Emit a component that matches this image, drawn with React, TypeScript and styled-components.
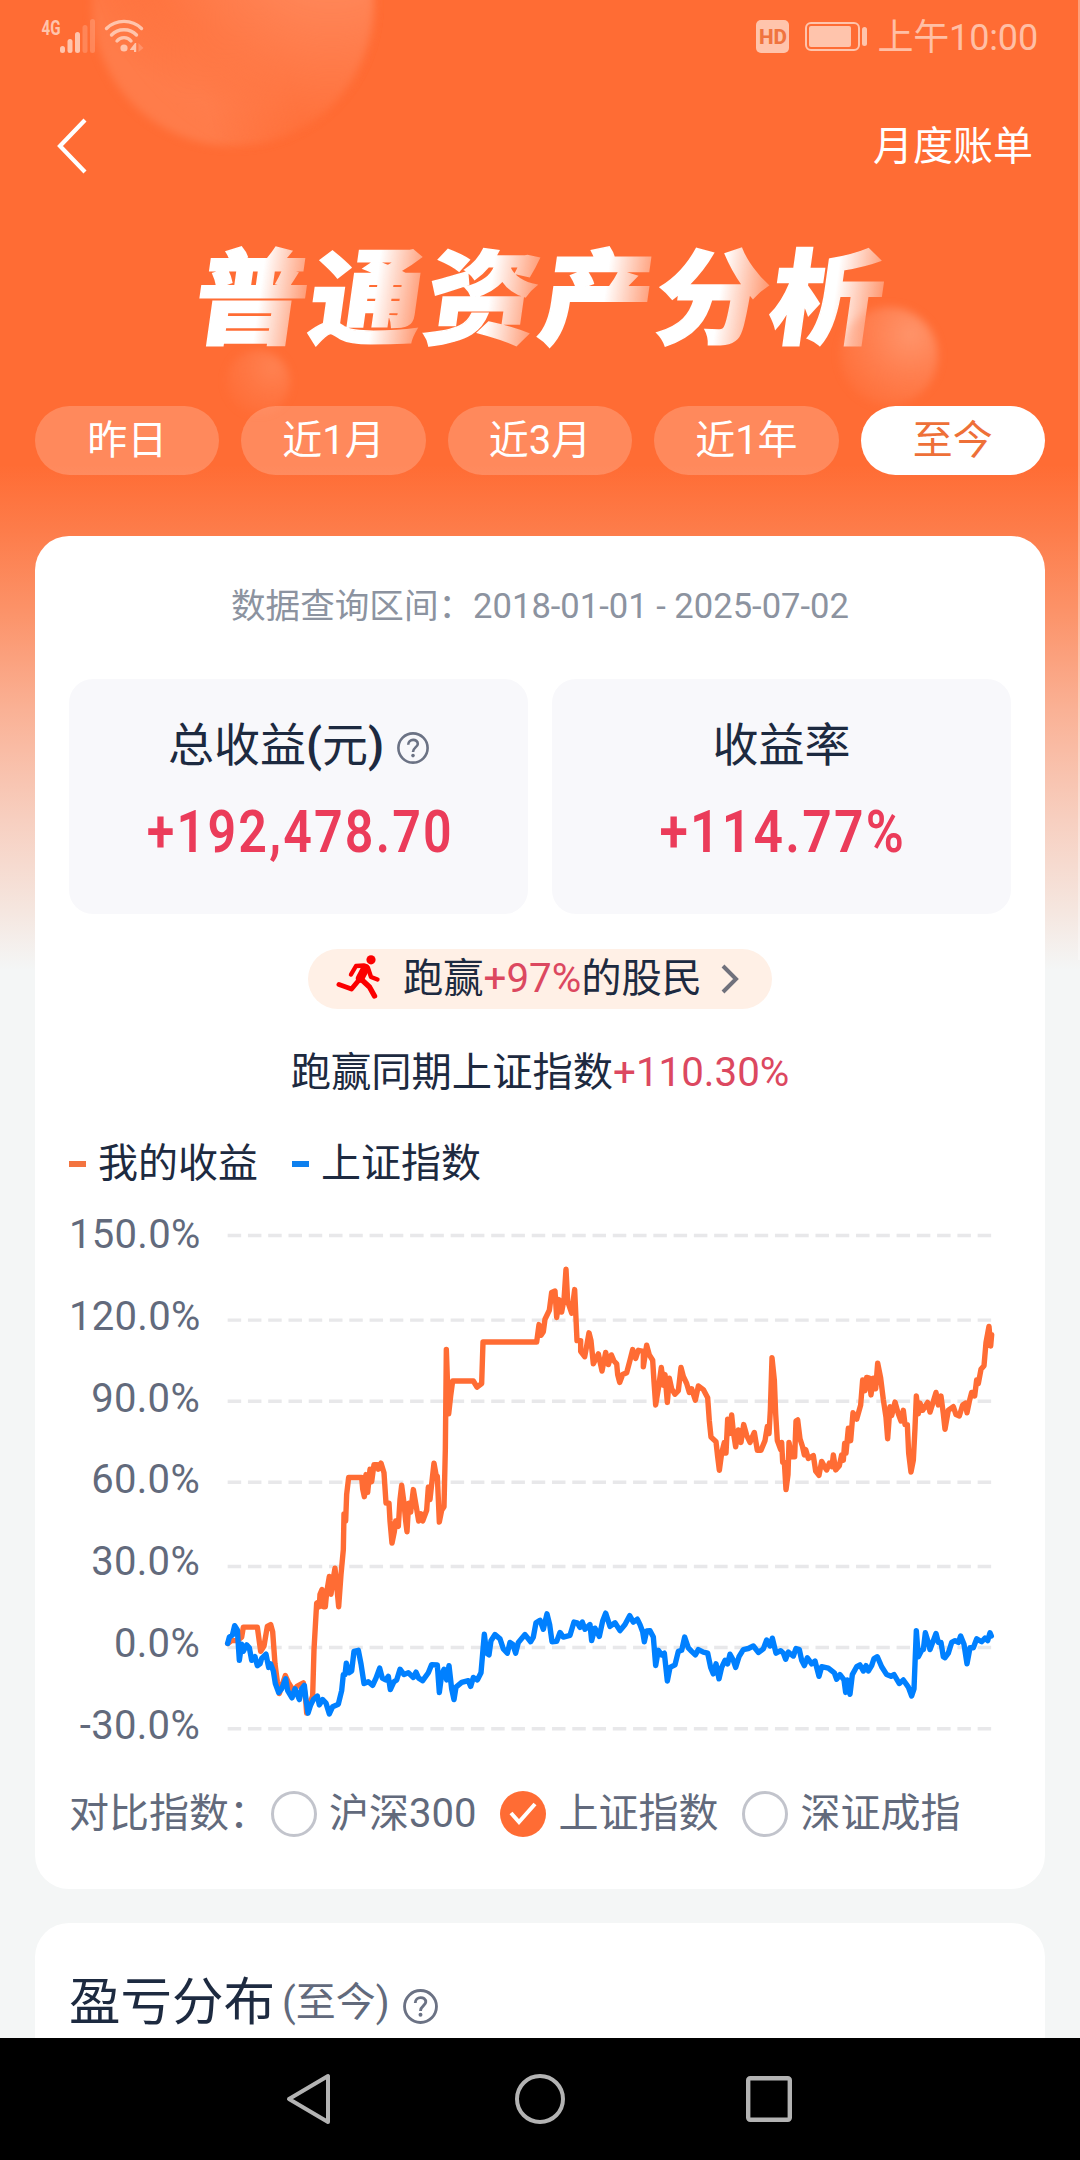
import React from "react";
import styled, { createGlobalStyle } from "styled-components";

const GlobalStyle = createGlobalStyle`
  * { box-sizing: border-box; }
  body { margin: 0; background: #f4f6f6; }
`;

const Screen = styled.div`
  position: relative;
  display: flex;
  flex-direction: column;
  width: 1080px;
  height: 2160px;
  overflow: hidden;
  color: #1d2a40;
  font-family: Roboto, "Noto Sans CJK SC", sans-serif;
  font-size: 40px;
  white-space: nowrap;
  background: linear-gradient(
    180deg,
    #ff6c34 0,
    #ff6c34 465px,
    #fd7c4a 530px,
    #fc9268 610px,
    #fab195 710px,
    #f7cfc0 820px,
    #f5e6df 910px,
    #f4f6f6 970px
  );
`;

const EdgeLight = styled.div`
  position: absolute;
  top: 0;
  right: 0;
  width: 2px;
  height: 960px;
  background: rgba(255, 255, 255, 0.35);
`;

const Bubble = styled.div<{ $x: number; $y: number; $w: number; $h: number }>`
  position: absolute;
  left: ${(p) => p.$x}px;
  top: ${(p) => p.$y}px;
  width: ${(p) => p.$w}px;
  height: ${(p) => p.$h}px;
  border-radius: 50%;
  filter: blur(4px);
`;

const BigBubble = styled(Bubble)`
  background:
    radial-gradient(circle at 62% 30%, rgba(255, 108, 52, 1) 0, rgba(255, 108, 52, 0.9) 42%, rgba(255, 108, 52, 0) 68%) -24px -22px no-repeat,
    linear-gradient(75deg, #ff7c4a 0, #ff7c4a 35%, #ff6c34 60%);
`;

const BigShine = styled(Bubble)`
  background: radial-gradient(circle at 85% 22%, rgba(255, 145, 102, 1) 0, rgba(255, 132, 86, 0.85) 32%, rgba(255, 108, 52, 0) 74%);
`;

const SmallBubble = styled(Bubble)<{ $alpha: number }>`
  background: radial-gradient(
    circle at 72% 28%,
    rgba(255, 165, 130, ${(p) => p.$alpha}) 0,
    rgba(255, 145, 105, ${(p) => p.$alpha * 0.75}) 40%,
    rgba(255, 120, 68, ${(p) => p.$alpha * 0.12}) 88%
  );
`;

const StatusBar = styled.div`
  position: relative;
  display: flex;
  align-items: flex-start;
  justify-content: space-between;
  height: 72px;
  padding: 17px 42px 0 41px;
`;

const StatusTime = styled.span`
  margin-left: 10px;
  color: #ffbfa5;
  font-size: 36px;
  line-height: 43px;
  letter-spacing: -0.15px;
`;

const StatusGroup = styled.div`
  display: flex;
  align-items: flex-start;
`;

const NavBar = styled.div`
  position: relative;
  display: flex;
  align-items: center;
  justify-content: space-between;
  height: 146px;
  padding: 2px 47px 0 56px;
  color: #fff;
`;

const NavLink = styled.a`
  margin-bottom: 7px;
`;

const Hero = styled.h1`
  position: relative;
  display: flex;
  justify-content: center;
  height: 156px;
  margin: 0 0 32px;
  transform: skewX(-8deg) scaleX(1.09);
  font-family: "Noto Sans CJK SC", sans-serif;
  font-size: 103.5px;
  font-weight: 900;
  line-height: 147px;
`;

const HeroGlyph = styled.span`
  width: 105.5px;
  text-align: center;
  color: transparent;
  background: linear-gradient(90deg, #fff 56%, rgba(255, 255, 255, 0.3) 98%);
  background-clip: text;
  -webkit-background-clip: text;
  -webkit-text-stroke: 1.5px transparent;
`;

const Tabs = styled.div`
  position: relative;
  display: grid;
  grid-template-columns: repeat(5, 1fr);
  gap: 22px;
  padding: 0 35px;
`;

const Tab = styled.button<{ $active: boolean }>`
  height: 69px;
  padding: 0;
  border: 0;
  border-radius: 35px;
  font: inherit;
  line-height: 69px;
  color: ${(p) => (p.$active ? "#ee7038" : "#fff")};
  background: ${(p) => (p.$active ? "#fff" : "rgba(255, 255, 255, 0.2)")};
`;

const Card = styled.section`
  position: relative;
  display: flex;
  flex-direction: column;
  margin: 0 35px;
  padding: 0 34px;
  border-radius: 34px;
  background: #fff;
`;

const SummaryCard = styled(Card)`
  height: 1353px;
  flex: none;
  margin-top: 61px;
  padding-top: 41px;
`;

const Line = styled.div<{ $top?: number }>`
  display: flex;
  align-items: center;
  justify-content: center;
  height: 60px;
  margin-top: ${(p) => p.$top ?? 0}px;
  line-height: 60px;
`;

const RangeLine = styled(Line)`
  padding-bottom: 2px;
  color: #8c93a0;
  font-size: 34.6px;
  line-height: 58px;
`;

const CompareLine = styled(Line)`
  font-size: 40.3px;
`;

const Stats = styled.div`
  display: grid;
  grid-template-columns: 1fr 1fr;
  gap: 24px;
  margin-top: 42px;
`;

const Stat = styled.div`
  display: flex;
  flex-direction: column;
  align-items: center;
  height: 235px;
  padding-top: 36px;
  border-radius: 24px;
  background: #f8f8fb;
`;

const StatLabel = styled.div`
  display: flex;
  align-items: center;
  gap: 13px;
  height: 60px;
  font-size: 46px;
  line-height: 60px;
`;

const Paren = styled.span`
  font-weight: 600;
`;

const StatValue = styled.div<{ $stretch: number }>`
  height: 80px;
  margin-top: 17px;
  padding-left: 4px;
  color: #eb3c5a;
  font-size: 59px;
  font-weight: 600;
  line-height: 80px;
  letter-spacing: 2.6px;
  transform: scaleX(${(p) => p.$stretch});
`;

const Pill = styled.a`
  display: flex;
  align-items: center;
  align-self: center;
  width: 464px;
  height: 60px;
  margin-top: 35px;
  padding-left: 28px;
  border-radius: 30px;
  font-size: 40.3px;
  line-height: 60px;
  background: #fff0e6;
`;

const PillText = styled.span`
  margin: 0 18px 0 22px;
`;

const Gain = styled.span`
  color: #dc4860;
`;

const Legend = styled(Line)`
  justify-content: flex-start;
`;

const LegendItem = styled.span<{ $color: string }>`
  display: flex;
  align-items: center;
  gap: 12px;
  margin-right: 34px;
  &::before {
    content: "";
    width: 17px;
    height: 6px;
    background: ${(p) => p.$color};
  }
`;

const Chart = styled.div`
  display: flex;
  height: 514px;
  margin-top: 27px;
`;

const Axis = styled.div`
  display: flex;
  flex-direction: column;
  width: 132px;
  margin: -27px 22px 0 0;
  padding-right: 1px;
  color: #626a7c;
  letter-spacing: 0.3px;
  text-align: right;
`;

const Tick = styled.span`
  flex: none;
  height: 81.8px;
  line-height: 82px;
`;

const CompareRow = styled(Line)`
  justify-content: flex-start;
  color: #626a7c;
`;

const CompareTitle = styled.span`
  margin-right: 2px;
`;

const Option = styled.label`
  display: flex;
  align-items: center;
  gap: 12px;
  margin-right: 24px;
`;

const Radio = styled.span<{ $on: boolean }>`
  display: flex;
  align-items: center;
  justify-content: center;
  width: 46px;
  height: 46px;
  border: ${(p) => (p.$on ? "0" : "3px solid #c2c4cc")};
  border-radius: 50%;
  background: ${(p) => (p.$on ? "#ff6c34" : "#fff")};
`;

const DistributionCard = styled(Card)`
  flex: 1;
  min-height: 0;
  margin-top: 34px;
  padding-top: 41px;
  border-radius: 34px 34px 0 0;
`;

const SectionTitle = styled.h2`
  display: flex;
  align-items: center;
  height: 78px;
  margin: 0;
  font-size: 51.5px;
  font-weight: 400;
  line-height: 78px;
`;

const SectionNote = styled.span`
  margin: 0 13px 0 7px;
  color: #626a7c;
  font-size: 40px;
`;

const HelpMark = styled.svg`
  flex: none;
  margin-top: 6px;
`;

const SystemNav = styled.nav`
  position: relative;
  display: flex;
  flex: none;
  align-items: center;
  height: 122px;
  padding-left: 285px;
  background: #000;
`;

const SystemButton = styled.span<{ $gap: number }>`
  display: flex;
  margin-left: ${(p) => p.$gap}px;
`;

const BatteryIcon = styled.svg`
  margin-left: 16px;
`;

const RunnerIcon = styled.svg`
  margin-bottom: 4px;
`;

const GRID_Y = [100.5, 337.5, 564.5, 791.5, 1027.5, 1254, 1481.5];
const TICKS = ["150.0%", "120.0%", "90.0%", "60.0%", "30.0%", "0.0%", "-30.0%"];

const MY_RETURN =
  "563,1243 575,1235 592,1235 605,1225 610,1197 652,1197 662,1265 672,1250 682,1195 692,1190 698,1210 705,1300 712,1350 718,1383 726,1360 736,1333 745,1352 760,1375 772,1362 790,1353 797,1400 800,1438 806,1420 818,1390 822,1260 830,1130 834,1128 838,1140 840,1105 846,1092 850,1140 856,1140 860,1100 868,1055 873,1105 880,1060 885,1032 890,1080 896,1140 903,1050 910,980 912,880 917,900 920,825 926,778 965,778 968,810 973,832 978,770 983,820 990,755 995,790 1002,742 1012,742 1015,755 1023,738 1032,765 1038,850 1047,850 1050,900 1056,962 1063,930 1067,900 1075,915 1080,840 1085,800 1092,850 1097,900 1101,930 1106,850 1112,875 1120,812 1127,850 1136,900 1143,880 1148,900 1160,870 1165,805 1170,840 1177,780 1182,738 1188,770 1192,775 1198,903 1205,870 1212,860 1216,700 1219,420 1222,500 1226,600 1232,550 1238,508 1300,508 1311,525 1325,515 1329,399 1490,399 1497,350 1503,380 1510,370 1515,335 1528,310 1535,260 1545,256 1550,330 1557,280 1565,315 1572,280 1578,195 1583,285 1595,318 1604,252 1611,395 1622,395 1622,425 1634,440 1640,410 1647,373 1653,395 1660,460 1675,432 1686,480 1697,428 1705,462 1714,435 1722,452 1730,460 1733,490 1739,512 1748,490 1760,485 1770,450 1778,420 1787,445 1795,422 1810,425 1810,468 1820,408 1828,435 1838,450 1842,510 1847,575 1855,530 1864,470 1870,520 1875,490 1882,568 1888,500 1895,530 1905,545 1915,535 1923,470 1930,495 1940,515 1948,540 1955,530 1966,562 1975,522 1990,532 2003,555 2008,620 2013,665 2028,678 2033,720 2038,758 2045,710 2053,680 2058,710 2063,615 2068,655 2075,603 2080,650 2087,692 2095,645 2103,680 2111,630 2120,660 2130,680 2143,652 2152,702 2163,702 2175,675 2182,635 2187,655 2191,590 2196,443 2203,505 2207,600 2212,675 2222,700 2225,680 2228,735 2233,735 2238,812 2244,770 2247,680 2255,720 2264,720 2268,620 2273,617 2280,670 2287,690 2293,715 2297,700 2305,725 2320,717 2327,760 2337,772 2345,733 2355,750 2360,757 2368,738 2376,748 2380,715 2387,757 2398,745 2405,715 2410,730 2414,682 2418,710 2425,640 2432,675 2439,597 2450,615 2462,575 2468,505 2475,535 2480,498 2488,500 2493,547 2500,500 2507,530 2513,458 2522,500 2530,560 2538,610 2543,670 2550,580 2555,605 2565,567 2575,600 2583,620 2590,590 2595,630 2602,630 2606,710 2613,763 2620,730 2625,640 2629,550 2635,600 2640,570 2648,590 2663,568 2670,595 2680,565 2688,540 2695,575 2703,550 2710,600 2715,643 2725,590 2740,580 2748,602 2758,606 2768,575 2776,570 2781,597 2788,565 2795,540 2804,550 2810,505 2815,515 2823,475 2832,465 2838,400 2847,355 2852,410 2855,378";

const INDEX_RETURN =
  "563,1243 568,1225 577,1220 584,1193 592,1205 598,1290 605,1245 610,1265 620,1247 628,1255 635,1290 645,1280 652,1305 660,1300 665,1285 678,1273 686,1310 692,1300 700,1320 706,1355 716,1380 725,1370 737,1342 743,1375 756,1395 765,1370 778,1400 785,1370 793,1360 798,1400 804,1438 812,1415 820,1400 832,1390 838,1415 848,1400 858,1410 868,1440 878,1420 895,1413 905,1375 910,1330 915,1330 919,1298 927,1325 935,1320 942,1265 955,1262 963,1300 972,1355 985,1350 998,1360 1008,1340 1019,1312 1027,1340 1037,1345 1045,1335 1051,1372 1062,1350 1070,1345 1080,1315 1092,1330 1105,1325 1120,1338 1128,1323 1136,1340 1148,1347 1165,1325 1175,1302 1192,1303 1198,1380 1205,1330 1212,1315 1220,1345 1227,1305 1235,1370 1242,1400 1248,1365 1265,1352 1285,1347 1292,1363 1300,1338 1312,1345 1323,1325 1329,1260 1333,1217 1340,1270 1347,1275 1353,1235 1365,1218 1380,1230 1390,1258 1402,1270 1410,1240 1418,1245 1427,1270 1435,1240 1455,1218 1472,1238 1480,1225 1488,1185 1500,1178 1510,1203 1521,1160 1529,1190 1536,1238 1550,1237 1560,1212 1570,1225 1590,1220 1602,1183 1612,1185 1620,1198 1627,1183 1635,1203 1650,1190 1655,1235 1665,1200 1678,1223 1688,1180 1697,1158 1710,1195 1725,1185 1740,1207 1755,1190 1769,1165 1780,1183 1792,1175 1800,1190 1808,1210 1813,1238 1820,1208 1830,1207 1840,1225 1847,1305 1855,1262 1865,1275 1873,1270 1882,1348 1890,1310 1905,1303 1915,1265 1925,1262 1934,1225 1945,1255 1955,1265 1966,1275 1975,1260 1990,1267 2003,1270 2012,1310 2020,1328 2028,1300 2037,1342 2045,1310 2055,1290 2063,1300 2070,1273 2080,1290 2087,1310 2097,1280 2110,1260 2125,1257 2140,1250 2155,1268 2170,1258 2180,1233 2190,1250 2197,1228 2208,1270 2222,1263 2230,1270 2237,1287 2245,1267 2260,1278 2268,1257 2278,1260 2285,1290 2293,1305 2302,1283 2315,1300 2325,1292 2337,1335 2345,1308 2365,1312 2383,1325 2390,1343 2400,1330 2412,1345 2417,1380 2422,1345 2430,1385 2437,1330 2450,1308 2460,1303 2470,1320 2478,1305 2485,1320 2495,1305 2502,1285 2512,1280 2525,1308 2540,1330 2553,1335 2562,1330 2578,1355 2590,1345 2605,1365 2615,1390 2622,1370 2625,1300 2629,1207 2635,1280 2645,1262 2650,1260 2656,1213 2665,1240 2670,1260 2680,1235 2688,1215 2695,1240 2703,1240 2710,1280 2715,1283 2725,1270 2735,1240 2745,1235 2755,1240 2762,1222 2772,1245 2781,1300 2790,1255 2800,1255 2810,1230 2825,1238 2835,1228 2843,1235 2850,1213 2854,1222";

function SignalIcons() {
  return (
    <svg width="110" height="40" viewBox="41 17 110 40" fill="#ffc4ac">
      <text x="41.5" y="34.5" fontFamily="Roboto, sans-serif" fontWeight="700" fontSize="21" textLength="19" lengthAdjust="spacingAndGlyphs">4G</text>
      <rect x="60" y="46" width="5" height="7" rx="2.5" />
      <rect x="67.5" y="39" width="5" height="14" rx="2.5" />
      <rect x="75" y="32" width="5" height="21" rx="2.5" />
      <rect x="82.5" y="25" width="5" height="28" rx="2.5" opacity=".3" />
      <rect x="90" y="19" width="5" height="34" rx="2.5" opacity=".3" />
      <g fill="none" stroke="#ffc4ac" strokeWidth="3.4" strokeLinecap="round">
        <path d="M106.500 28.500C116 19 132 19 141.500 28.500" />
        <path d="M111.500 35C118 28 130 28 136.500 35" />
        <path d="M117 41C120.500 36.500 127.500 36.500 131 41" />
      </g>
      <circle cx="124" cy="48" r="3.6" />
      <path d="M130 49.500L135 43H136.200V52H134V50H130Z" />
      <path d="M138.500 43L143.500 48L138.500 52Z" opacity=".35" />
    </svg>
  );
}

function HdBadge() {
  return (
    <svg width="33" height="36" viewBox="0 0 33 36">
      <rect y="3" width="33" height="33" rx="5" fill="#ffc4ac" />
      <text x="3" y="27" fill="#f0743f" fontFamily="Roboto, sans-serif" fontWeight="800" fontSize="21" textLength="28" lengthAdjust="spacingAndGlyphs">HD</text>
    </svg>
  );
}

function Battery() {
  return (
    <BatteryIcon width="62" height="36" viewBox="0 0 62 36">
      <rect x="1" y="6" width="53" height="27" rx="5" fill="none" stroke="#ffc4ac" strokeWidth="2" />
      <rect x="4" y="9" width="42" height="21" rx="2" fill="#ffc4ac" />
      <rect x="57" y="10" width="5" height="19" rx="2.5" fill="#ffc4ac" />
    </BatteryIcon>
  );
}

function BackIcon() {
  return (
    <svg width="34" height="60" viewBox="56 117 34 60" fill="none" stroke="#fff" strokeWidth="4.2">
      <path d="M85 121L60 147L85 173" />
    </svg>
  );
}

function HelpIcon({ size }: { size: number }) {
  return (
    <HelpMark width={size} height={size} viewBox="0 0 32 32" fill="none" stroke="#6b7284" strokeWidth="2.6">
      <circle cx="16" cy="16" r="14.6" />
      <path d="M11.200 12.800C11.200 6.200 21 6.500 20.800 12C20.700 15 16 15.600 16 20" />
      <circle cx="16" cy="23.6" r="1.8" fill="#6b7284" stroke="none" />
    </HelpMark>
  );
}

function Runner() {
  return (
    <RunnerIcon width="45" height="45" viewBox="0 0 45 45" fill="none" stroke="#fb0000" strokeLinecap="round" strokeLinejoin="round">
      <circle cx="35" cy="4.8" r="4.6" fill="#fb0000" stroke="none" />
      <path d="M29.500 13L24 23.500" strokeWidth="8.6" />
      <path d="M28 10.500L20 11L15 19.500" strokeWidth="4.4" />
      <path d="M32 13L35 22L41.500 24.500" strokeWidth="4.4" />
      <path d="M23 25L15.500 34L3 29.500" strokeWidth="5" />
      <path d="M26 25L33.500 32L38.500 41" strokeWidth="5.4" />
    </RunnerIcon>
  );
}

function PerformanceChart() {
  return (
    <svg
      width="776"
      height="514.3"
      viewBox="549 60 2328 1440"
      preserveAspectRatio="none"
      fill="none"
      strokeLinejoin="round"
      strokeLinecap="round"
    >
      {GRID_Y.map((y) => (
        <path key={y} d={`M563 ${y}H2855`} stroke="#e8e8ea" strokeWidth="3.4" strokeLinecap="butt" strokeDasharray="13.5 6.77" vectorEffect="non-scaling-stroke" />
      ))}
      <polyline points={MY_RETURN} stroke="#ff6c34" strokeWidth="5.4" vectorEffect="non-scaling-stroke" />
      <polyline points={INDEX_RETURN} stroke="#0080ff" strokeWidth="5.4" vectorEffect="non-scaling-stroke" />
    </svg>
  );
}

const PERIODS = ["昨日", "近1月", "近3月", "近1年", "至今"];
const INDEXES = ["沪深300", "上证指数", "深证成指"];

export default function App() {
  return (
    <>
      <GlobalStyle />
      <Screen>
        <EdgeLight />
        <BigBubble $x={92} $y={-138} $w={282} $h={284} />
        <BigShine $x={92} $y={-138} $w={282} $h={284} />
        <SmallBubble $x={226} $y={350} $w={64} $h={64} $alpha={0.38} />
        <StatusBar>
          <SignalIcons />
          <StatusGroup>
            <HdBadge />
            <Battery />
            <StatusTime>上午10:00</StatusTime>
          </StatusGroup>
        </StatusBar>
        <NavBar>
          <BackIcon />
          <NavLink>月度账单</NavLink>
        </NavBar>
        <Hero>
          {Array.from("普通资产分析").map((c) => (
            <HeroGlyph key={c}>{c}</HeroGlyph>
          ))}
        </Hero>
        <SmallBubble $x={840} $y={307} $w={98} $h={98} $alpha={0.7} />
        <Tabs>
          {PERIODS.map((p) => (
            <Tab key={p} $active={p === "至今"}>{p}</Tab>
          ))}
        </Tabs>

        <SummaryCard>
          <RangeLine>数据查询区间：2018-01-01 - 2025-07-02</RangeLine>
          <Stats>
            <Stat>
              <StatLabel>
                <span>总收益<Paren>(</Paren>元<Paren>)</Paren></span>
                <HelpIcon size={32} />
              </StatLabel>
              <StatValue $stretch={0.85}>+192,478.70</StatValue>
            </Stat>
            <Stat>
              <StatLabel>收益率</StatLabel>
              <StatValue $stretch={0.875}>+114.77%</StatValue>
            </Stat>
          </Stats>
          <Pill>
            <Runner />
            <PillText>跑赢<Gain>+97%</Gain>的股民</PillText>
            <svg width="20" height="30" viewBox="0 0 20 30" fill="none" stroke="#70717c" strokeWidth="4">
              <path d="M3 2L16 15L3 28" />
            </svg>
          </Pill>
          <CompareLine $top={34}>跑赢同期上证指数<Gain>+110.30%</Gain></CompareLine>
          <Legend $top={31}>
            <LegendItem $color="#f37440">我的收益</LegendItem>
            <LegendItem $color="#0e80ee">上证指数</LegendItem>
          </Legend>
          <Chart>
            <Axis>
              {TICKS.map((t) => (
                <Tick key={t}>{t}</Tick>
              ))}
            </Axis>
            <PerformanceChart />
          </Chart>
          <CompareRow $top={49}>
            <CompareTitle>对比指数：</CompareTitle>
            {INDEXES.map((name) => {
              const on = name === "上证指数";
              return (
                <Option key={name}>
                  <Radio $on={on}>
                    {on && (
                      <svg width="30" height="28" viewBox="0 0 30 28" fill="none" stroke="#fff" strokeWidth="4">
                        <path d="M3 13L11 22L27 4" />
                      </svg>
                    )}
                  </Radio>
                  {name}
                </Option>
              );
            })}
          </CompareRow>
        </SummaryCard>

        <DistributionCard>
          <SectionTitle>
            盈亏分布
            <SectionNote>(至今)</SectionNote>
            <HelpIcon size={35} />
          </SectionTitle>
        </DistributionCard>

        <SystemNav>
          <SystemButton $gap={0}>
            <svg width="48" height="54" viewBox="0 0 48 54" fill="none" stroke="#b3b3b3" strokeWidth="4" strokeLinejoin="round">
              <path d="M43 4V50L4 27Z" />
            </svg>
          </SystemButton>
          <SystemButton $gap={182}>
            <svg width="50" height="50" viewBox="0 0 50 50" fill="none" stroke="#b3b3b3" strokeWidth="4">
              <circle cx="25" cy="25" r="23" />
            </svg>
          </SystemButton>
          <SystemButton $gap={181}>
            <svg width="46" height="46" viewBox="0 0 46 46" fill="none" stroke="#b3b3b3" strokeWidth="4.4">
              <rect x="2.2" y="2.2" width="41.6" height="41.6" rx="2" />
            </svg>
          </SystemButton>
        </SystemNav>
      </Screen>
    </>
  );
}
